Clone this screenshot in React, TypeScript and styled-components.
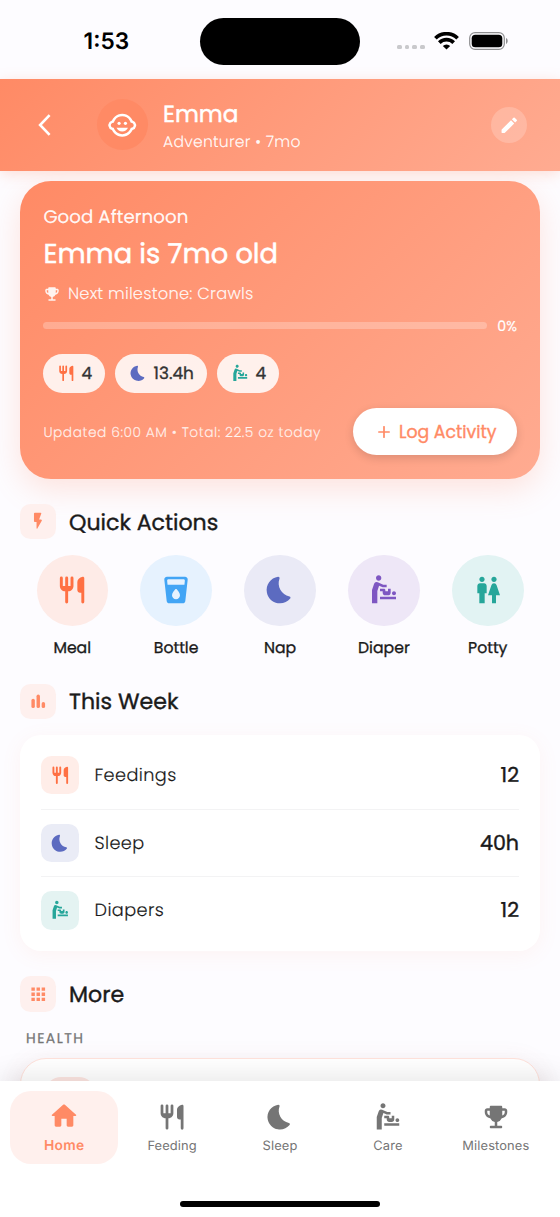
import React from 'react';
import styled, { createGlobalStyle, css } from 'styled-components';
import { MdOutlineChildCare, MdBabyChangingStation, MdWc, MdApps } from 'react-icons/md';

const Global = createGlobalStyle`
  * { box-sizing: border-box; }
  html, body { margin: 0; padding: 0; }
  body {
    width: 560px;
    height: 1217px;
    overflow: hidden;
    background: #fdfcff;
    color: #1a1a1a;
    font-family: Poppins, Inter, sans-serif;
    -webkit-font-smoothing: antialiased;
    text-rendering: geometricPrecision;
  }
`;

const coral = '#ff8a65';

/* ---------- icons ---------- */

type IconProps = { size: number };

const Glyph = ({ size, d }: IconProps & { d: string }) => (
  <svg width={size} height={size} viewBox="0 0 24 24" fill="currentColor" fillRule="evenodd">
    <path d={d} />
  </svg>
);

const Flatware = ({ size }: IconProps) => (
  <Glyph
    size={size}
    d="M2.9 3a1.1 1.1 0 0 1 2.2 0v6h1.8V3a1.1 1.1 0 0 1 2.2 0v6h1.8V3a1.1 1.1 0 0 1 2.2 0v6c0 2.21-1.79 4-4 4v8a1.1 1.1 0 0 1-2.2 0v-8c-2.21 0-4-1.79-4-4zM16 6v6c0 1.1.9 2 2 2h1v7a1.1 1.1 0 0 0 2.2 0V3.13c0-.65-.61-1.13-1.24-.98C17.6 2.68 16 4.51 16 6z"
  />
);
const Moon = ({ size }: IconProps) => (
  <Glyph
    size={size}
    d="M11.65 3.46c.27-.71-.36-1.45-1.12-1.34-5.52.8-9.47 6.07-8.34 11.88.78 4.02 4.09 7.21 8.14 7.87 3.74.61 7.16-.87 9.32-3.44.48-.57.19-1.48-.55-1.62-6.02-1.15-9.68-7.53-7.45-13.35z"
  />
);
const Cup = ({ size }: IconProps) => (
  <Glyph
    size={size}
    d="M5.23 2C4.04 2 3.11 3.04 3.24 4.22l1.77 16.01C5.13 21.23 5.97 22 7 22h10c1.03 0 1.87-.77 1.99-1.77l1.77-16.01C20.9 3.04 19.96 2 18.77 2H5.23zM12 19c-1.66 0-3-1.34-3-3 0-1.45 1.78-3.7 2.63-4.67.2-.23.55-.23.75 0C13.22 12.3 15 14.55 15 16c0 1.66-1.34 3-3 3zm6.33-11H5.67l-.32-2.89C5.29 4.52 5.75 4 6.34 4h11.31c.6 0 1.06.52.99 1.11L18.33 8z"
  />
);
const Trophy = ({ size }: IconProps) => (
  <Glyph
    size={size}
    d="M19 5h-2V4c0-.55-.45-1-1-1H8c-.55 0-1 .45-1 1v1H5c-1.1 0-2 .9-2 2v1c0 2.55 1.92 4.63 4.39 4.94A5.01 5.01 0 0 0 11 15.9V19H8c-.55 0-1 .45-1 1s.45 1 1 1h8c.55 0 1-.45 1-1s-.45-1-1-1h-3v-3.1a5.01 5.01 0 0 0 3.61-2.96C19.08 12.63 21 10.55 21 8V7c0-1.1-.9-2-2-2zM5 8V7h2v3.82C5.84 10.4 5 9.3 5 8zm14 0c0 1.3-.84 2.4-2 2.82V7h2v1z"
  />
);
const Pencil = ({ size }: IconProps) => (
  <Glyph
    size={size}
    d="M3 17.46v3.04c0 .28.22.5.5.5h3.04c.13 0 .26-.05.35-.15L17.81 9.94l-3.75-3.75L3.15 17.1c-.1.1-.15.22-.15.36zM20.71 7.04a.996.996 0 0 0 0-1.41l-2.34-2.34a.996.996 0 0 0-1.41 0l-1.83 1.83 3.75 3.75 1.83-1.83z"
  />
);
const House = ({ size }: IconProps) => (
  <Glyph
    size={size}
    d="M10 19v-5h4v5c0 .55.45 1 1 1h3c.55 0 1-.45 1-1v-7h1.7c.46 0 .68-.57.33-.87L12.67 3.6c-.38-.34-.96-.34-1.34 0l-8.36 7.53c-.34.3-.13.87.33.87H5v7c0 .55.45 1 1 1h3c.55 0 1-.45 1-1z"
  />
);
const Flash = ({ size }: IconProps) => (
  <Glyph
    size={size}
    d="M7 3v9c0 .55.45 1 1 1h2v7.15c0 .51.67.69.93.25l5.19-8.9a.995.995 0 0 0-.86-1.5H13l2.49-6.65A.994.994 0 0 0 14.56 2H8c-.55 0-1 .45-1 1z"
  />
);
const Bars = ({ size }: IconProps) => (
  <svg width={size} height={size} viewBox="0 0 24 24" fill="currentColor">
    <rect x="4" y="9" width="4" height="11" rx="2" />
    <rect x="10" y="4" width="4" height="16" rx="2" />
    <rect x="16" y="13" width="4" height="7" rx="2" />
  </svg>
);
const Plus = () => (
  <svg width="12" height="12" viewBox="0 0 12 12" fill="none" stroke="currentColor" strokeWidth="1.7" strokeLinecap="round">
    <path d="M6 .8v10.4M.8 6h10.4" />
  </svg>
);
const Chevron = () => (
  <svg width="14" height="22" viewBox="0 0 14 22" fill="none" stroke="#fff" strokeWidth="2.6">
    <path d="M11.6 1.2 2.1 11l9.5 9.8" />
  </svg>
);
const Wifi = () => (
  <svg width="25" height="18" viewBox="0 0 25 18" fill="none" stroke="#000" strokeWidth="3.7">
    <path d="M1.4 6.3a15.7 15.7 0 0 1 22.2 0" />
    <path d="M5.3 10.6a10.2 10.2 0 0 1 14.4 0" />
    <path d="M12.5 17.6l-3.7-3.6a5.2 5.2 0 0 1 7.4 0z" fill="#000" stroke="none" />
  </svg>
);
const Battery = () => (
  <svg width="40" height="18" viewBox="0 0 40 18">
    <rect x=".7" y=".6" width="34.6" height="16.8" rx="5.4" fill="none" stroke="#8e8e90" strokeWidth="1.2" />
    <rect x="2.7" y="2.7" width="30.6" height="12.6" rx="3.6" fill="#000" />
    <path d="M37 6v6c1-.4 1.7-1.6 1.7-3s-.7-2.6-1.7-3z" fill="#8e8e90" />
  </svg>
);

/* ---------- text ---------- */

type TextProps = {
  $size: number;
  $weight?: number;
  $color?: string;
  $track?: number;
  $line?: number;
  $thicken?: number;
  $ui?: boolean;
};
const Text = styled.span<TextProps>`
  display: block;
  white-space: nowrap;
  font-size: ${(p) => p.$size}px;
  font-weight: ${(p) => p.$weight ?? 400};
  color: ${(p) => p.$color ?? 'inherit'};
  letter-spacing: ${(p) => p.$track ?? 0}px;
  line-height: ${(p) => (p.$line ? `${p.$line}px` : 'normal')};
  -webkit-text-stroke: ${(p) => p.$thicken ?? 0}px currentColor;
  ${(p) => p.$ui && css`font-family: Inter, sans-serif;`}
`;

/* ---------- shell ---------- */

const Screen = styled.div`
  width: 560px;
  height: 1217px;
  display: flex;
  flex-direction: column;
  overflow: hidden;
  background: #fdfcff;
`;

const StatusBar = styled.div`
  flex: none;
  height: 79px;
  display: grid;
  grid-template-columns: 200px 160px 200px;
  padding-top: 18px;
`;
const Clock = styled(Text)`
  padding-left: 83.6px;
`;
const Island = styled.div`
  height: 46.5px;
  border-radius: 24px;
  background: #000;
`;
const StatusIcons = styled.div`
  display: flex;
  height: 46px;
  padding-left: 37px;
  align-items: center;
`;
const Signal = styled.div`
  display: flex;
  gap: 3px;
  margin: 12px 9.5px 0 0;
  i { width: 4.7px; height: 4.7px; border-radius: 1.5px; background: #c9c9cc; }
`;
const WifiWrap = styled.div`
  display: flex;
  margin-left: 0.2px;
`;
const BatteryWrap = styled.div`
  display: flex;
  margin-left: 9.5px;
`;

const Header = styled.header`
  flex: none;
  height: 91.5px;
  display: flex;
  align-items: center;
  padding: 0 33px 0 37.5px;
  background: linear-gradient(135deg, #ff8a65, #ffab91);
  box-shadow: 0 3px 13px rgba(255, 138, 101, 0.26);
  color: #fff;
`;
const Avatar = styled.div`
  width: 51px;
  height: 51px;
  margin-left: 45px;
  border-radius: 50%;
  background: ${coral};
  display: grid;
  place-items: center;
`;
const Identity = styled.div`
  flex: 1;
  margin-left: 15.5px;
  padding-top: 5px;
`;
const EditButton = styled.button`
  width: 36px;
  height: 36px;
  padding: 0;
  border: 0;
  border-radius: 50%;
  color: #fff;
  background: rgba(255, 255, 255, 0.2);
  display: grid;
  place-items: center;
`;

const Content = styled.main`
  flex: 1;
  min-height: 0;
  overflow: hidden;
  padding: 10.5px 20px 0;
  display: flex;
  flex-direction: column;
`;

/* ---------- hero ---------- */

const Hero = styled.section`
  flex: none;
  height: 297.5px;
  padding: 21.5px 23px 0 23.4px;
  border-radius: 31px;
  color: #fff;
  background: linear-gradient(135deg, #ff8a65, #ffab91);
  box-shadow: 0 10px 31px rgba(255, 138, 101, 0.22);
`;
const Milestone = styled.div`
  display: flex;
  align-items: center;
  gap: 6.5px;
  margin-top: 11px;
  color: rgba(255, 255, 255, 0.9);
`;
const ProgressRow = styled.div`
  display: flex;
  align-items: center;
  gap: 10px;
  margin-top: 9px;
`;
const Track = styled.div`
  flex: 1;
  height: 6.5px;
  border-radius: 4px;
  background: rgba(255, 255, 255, 0.25);
`;
const Chips = styled.div`
  display: flex;
  gap: 10px;
  margin-top: 14px;
`;
const Chip = styled.div<{ $width: number }>`
  width: ${(p) => p.$width}px;
  height: 39px;
  padding-left: 13.2px;
  border-radius: 20px;
  background: rgba(255, 255, 255, 0.86);
  display: flex;
  align-items: center;
  gap: 6.5px;
`;
const Tint = styled.span<{ $color: string }>`
  display: flex;
  color: ${(p) => p.$color};
`;
const HeroFoot = styled.div`
  display: flex;
  align-items: center;
  justify-content: space-between;
  margin-top: 15.5px;
`;
const Updated = styled(Text)`
  padding-top: 2px;
`;
const LogButton = styled.button`
  width: 164px;
  height: 47px;
  padding: 0 0 0 25px;
  border: 0;
  border-radius: 24px;
  font-family: inherit;
  background: #fff;
  color: ${coral};
  box-shadow: 0 3px 10px rgba(0, 0, 0, 0.14);
  display: flex;
  align-items: center;
  gap: 9px;
`;

/* ---------- sections ---------- */

const SectionHead = styled.div<{ $top: number }>`
  flex: none;
  display: flex;
  align-items: center;
  gap: 13px;
  height: 36px;
  margin-top: ${(p) => p.$top}px;
`;
const SectionIcon = styled.div`
  width: 36px;
  height: 35.5px;
  border-radius: 10.5px;
  background: #fef0ee;
  color: ${coral};
  display: grid;
  place-items: center;
`;

const SectionTitle = styled(Text)`
  padding-top: 1px;
`;

const Actions = styled.div`
  flex: none;
  display: flex;
  justify-content: space-between;
  margin: 15px 16.5px 0;
`;
const Action = styled.div`
  width: 71.5px;
  display: flex;
  flex-direction: column;
  align-items: center;
  gap: 12.5px;
`;
const Disc = styled.div<{ $bg: string; $color: string }>`
  width: 71.5px;
  height: 71.5px;
  border-radius: 50%;
  background: ${(p) => p.$bg};
  color: ${(p) => p.$color};
  display: grid;
  place-items: center;
`;

const Card = styled.div`
  flex: none;
  height: 215.5px;
  margin-top: 15.5px;
  padding: 6.4px 21px;
  border-radius: 21px;
  background: #fff;
  box-shadow: 0 4px 20px rgba(255, 138, 101, 0.08);
`;
const Row = styled.div`
  display: flex;
  align-items: center;
  height: 67.5px;
  & + & { border-top: 1.3px solid #f3f3f4; }
`;
const Tile = styled.div<{ $bg: string; $color: string }>`
  width: 38px;
  height: 38.5px;
  margin-right: 15.5px;
  border-radius: 10.5px;
  background: ${(p) => p.$bg};
  color: ${(p) => p.$color};
  display: grid;
  place-items: center;
`;
const Value = styled(Text)`
  margin-left: auto;
`;
const GroupLabel = styled(Text)`
  flex: none;
  margin: 15.5px 0 0 6px;
`;
const ListCard = styled.div`
  flex: none;
  height: 120px;
  margin-top: 10px;
  padding: 18px 24px;
  border: 1.3px solid #ffe2db;
  border-radius: 26px;
  background: #fff;
  box-shadow: 0 4px 24px rgba(160, 80, 80, 0.1);
`;
const ListTile = styled.div`
  width: 50px;
  height: 50px;
  border-radius: 16px;
  background: #fde6e2;
`;

/* ---------- bottom navigation ---------- */

const BottomNav = styled.nav`
  position: relative;
  flex: none;
  height: 136.5px;
  padding: 10.5px 10.2px 0;
  background: #fff;
  box-shadow: 0 -4px 26px rgba(0, 0, 0, 0.1);
  display: flex;
  flex-direction: column;
`;
const Tabs = styled.div`
  display: flex;
`;
const Tab = styled.div<{ $active?: boolean }>`
  flex: 1;
  height: 72.5px;
  padding-top: ${(p) => (p.$active ? 9 : 11)}px;
  border-radius: 21px;
  display: flex;
  flex-direction: column;
  align-items: center;
  gap: ${(p) => (p.$active ? 3.5 : 5.2)}px;
  color: #757575;
  ${(p) => p.$active && css`
    color: ${coral};
    background: #fff0ed;
  `}
`;
const HomeIndicator = styled.div`
  width: 200px;
  height: 6.5px;
  margin: 37px auto 0;
  border-radius: 4px;
  background: #000;
`;

const actions = [
  { label: 'Meal', bg: '#feebe7', color: '#ff7043', icon: <Flatware size={32} /> },
  { label: 'Bottle', bg: '#e6f2fe', color: '#42a5f5', icon: <Cup size={32} /> },
  { label: 'Nap', bg: '#eaeaf6', color: '#5c6bc0', icon: <Moon size={32} /> },
  { label: 'Diaper', bg: '#eee7f7', color: '#7e57c2', icon: <MdBabyChangingStation size={32} /> },
  { label: 'Potty', bg: '#e2f3f3', color: '#26a69a', icon: <MdWc size={32} /> },
];

const week = [
  { label: 'Feedings', value: '12', bg: '#ffede8', color: '#ff7043', icon: <Flatware size={20.5} /> },
  { label: 'Sleep', value: '40h', bg: '#eaecf6', color: '#5c6bc0', icon: <Moon size={20.5} /> },
  { label: 'Diapers', value: '12', bg: '#e4f3f2', color: '#26a69a', icon: <MdBabyChangingStation size={20.5} /> },
];

const tabs = [
  { label: 'Home', icon: <House size={32} />, active: true },
  { label: 'Feeding', icon: <Flatware size={30} /> },
  { label: 'Sleep', icon: <Moon size={30} /> },
  { label: 'Care', icon: <MdBabyChangingStation size={30} /> },
  { label: 'Milestones', icon: <Trophy size={30} /> },
];

export default function App() {
  return (
    <Screen>
      <Global />
      <StatusBar>
        <Clock $ui $size={22.7} $weight={600} $line={47} $color="#000">1:53</Clock>
        <Island />
        <StatusIcons>
          <Signal><i /><i /><i /><i /></Signal>
          <WifiWrap><Wifi /></WifiWrap>
          <BatteryWrap><Battery /></BatteryWrap>
        </StatusIcons>
      </StatusBar>

      <Header>
        <Chevron />
        <Avatar><MdOutlineChildCare size={30.5} /></Avatar>
        <Identity>
          <Text $size={23.2} $thicken={0.45} $line={30}>Emma</Text>
          <Text $size={15.6} $weight={300} $thicken={0.15} $line={25} $track={0.25} $color="rgba(255,255,255,.95)">Adventurer • 7mo</Text>
        </Identity>
        <EditButton><Pencil size={20.5} /></EditButton>
      </Header>

      <Content>
        <Hero>
          <Text $size={18.2} $thicken={0.2} $line={30} $track={0.07} $color="rgba(255,255,255,.95)">Good Afternoon</Text>
          <Text $size={27.3} $thicken={0.5} $line={41}>Emma is 7mo old</Text>
          <Milestone>
            <Trophy size={18} />
            <Text $size={16.3} $weight={300} $thicken={0.15} $line={16} $track={0.23}>Next milestone: Crawls</Text>
          </Milestone>
          <ProgressRow>
            <Track />
            <Text $size={14.2} $thicken={0.15} $line={28}>0%</Text>
          </ProgressRow>
          <Chips>
            <Chip $width={62}>
              <Tint $color="#ff7043"><Flatware size={18.5} /></Tint>
              <Text $size={16.9} $thicken={0.35} $color="#333">4</Text>
            </Chip>
            <Chip $width={92}>
              <Tint $color="#5c6bc0"><Moon size={18.5} /></Tint>
              <Text $size={16.9} $thicken={0.35} $color="#333">13.4h</Text>
            </Chip>
            <Chip $width={62}>
              <Tint $color="#26a69a"><MdBabyChangingStation size={18.5} /></Tint>
              <Text $size={16.9} $thicken={0.35} $color="#333">4</Text>
            </Chip>
          </Chips>
          <HeroFoot>
            <Updated $size={13.8} $weight={300} $thicken={0.15} $track={0.52} $color="rgba(255,255,255,.82)">
              Updated 6:00 AM • Total: 22.5 oz today
            </Updated>
            <LogButton>
              <Plus />
              <Text $size={17.3} $thicken={0.35}>Log Activity</Text>
            </LogButton>
          </HeroFoot>
        </Hero>

        <SectionHead $top={25}>
          <SectionIcon><Flash size={20.5} /></SectionIcon>
          <SectionTitle $size={22.1} $thicken={0.4}>Quick Actions</SectionTitle>
        </SectionHead>
        <Actions>
          {actions.map((a) => (
            <Action key={a.label}>
              <Disc $bg={a.bg} $color={a.color}>{a.icon}</Disc>
              <Text $size={15.7} $thicken={0.3} $line={20}>{a.label}</Text>
            </Action>
          ))}
        </Actions>

        <SectionHead $top={25}>
          <SectionIcon><Bars size={20.5} /></SectionIcon>
          <Text $size={22.1} $thicken={0.4}>This Week</Text>
        </SectionHead>
        <Card>
          {week.map((w) => (
            <Row key={w.label}>
              <Tile $bg={w.bg} $color={w.color}>{w.icon}</Tile>
              <Text $size={17.7} $weight={300} $thicken={0.15} $track={0.4}>{w.label}</Text>
              <Value $size={20.6} $thicken={0.4}>{w.value}</Value>
            </Row>
          ))}
        </Card>

        <SectionHead $top={25.5}>
          <SectionIcon><MdApps size={20.5} /></SectionIcon>
          <Text $size={22.1} $thicken={0.4}>More</Text>
        </SectionHead>
        <GroupLabel $size={14} $thicken={0.25} $track={1.45} $line={20} $color="#757575">HEALTH</GroupLabel>
        <ListCard><ListTile /></ListCard>
      </Content>

      <BottomNav>
        <Tabs>
          {tabs.map((t) => (
            <Tab key={t.label} $active={t.active}>
              {t.icon}
              <Text $ui $size={t.active ? 13.8 : 12.9} $weight={t.active ? 600 : 400} $line={20} $track={t.active ? 0.3 : 0.1}>
                {t.label}
              </Text>
            </Tab>
          ))}
        </Tabs>
        <HomeIndicator />
      </BottomNav>
    </Screen>
  );
}
